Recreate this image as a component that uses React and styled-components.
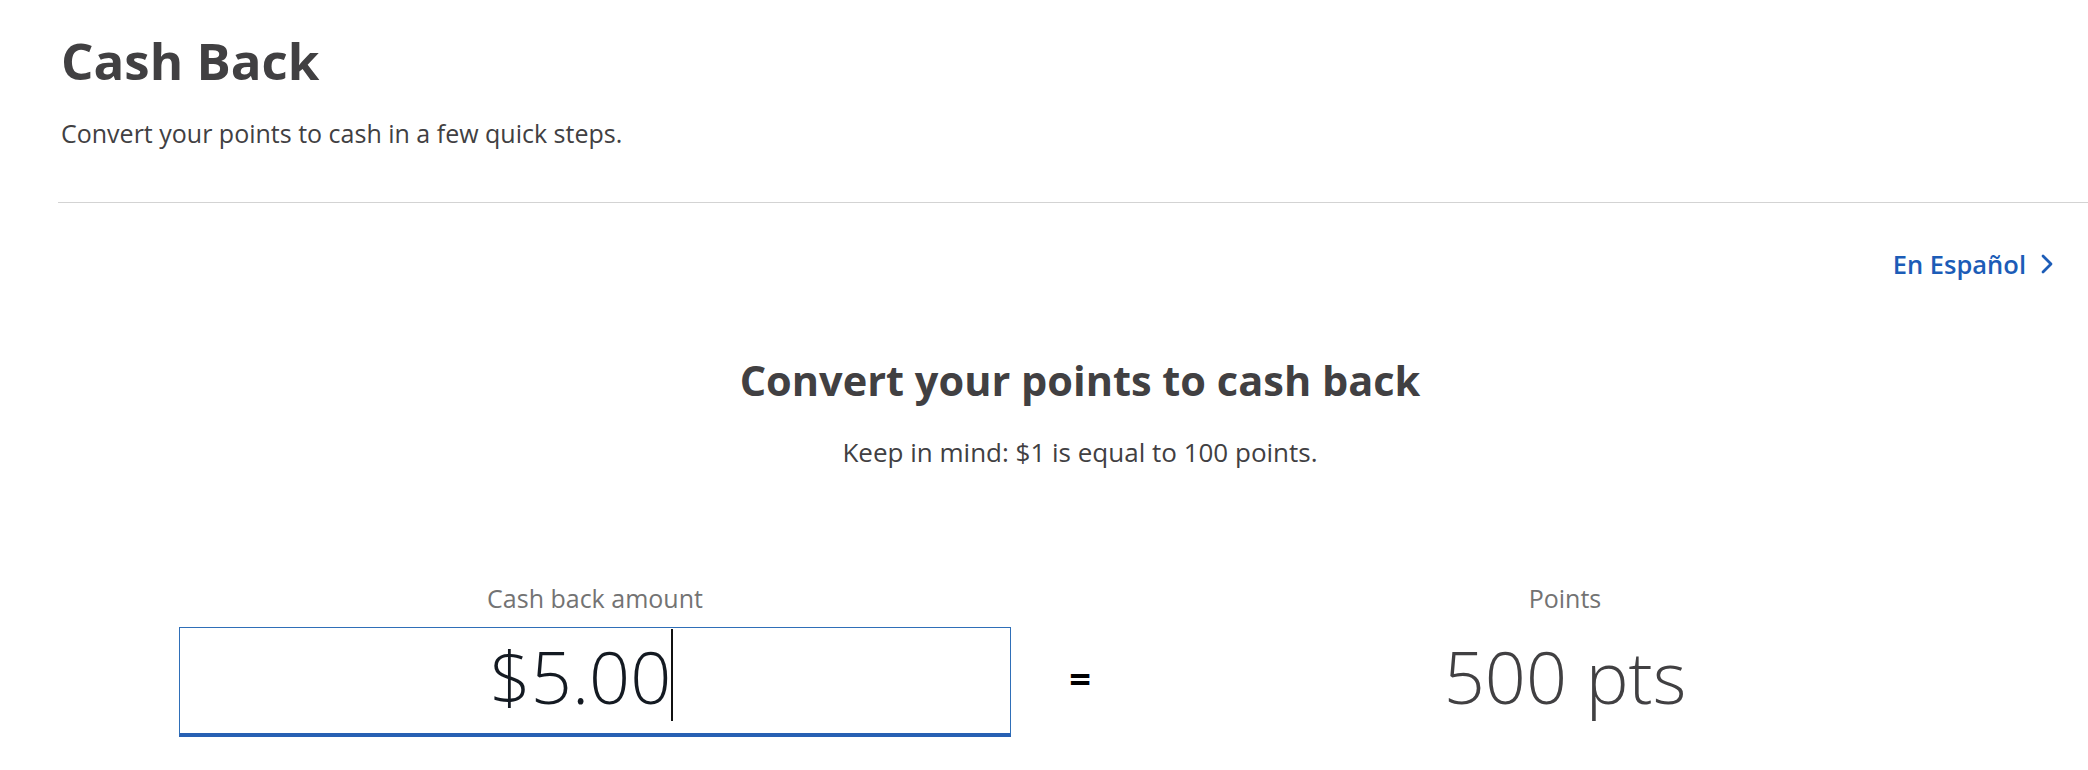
import React from 'react'
import styled, { createGlobalStyle } from 'styled-components'

const GlobalStyle = createGlobalStyle`
  html, body {
    margin: 0;
    padding: 0;
    overflow: hidden;
    background: #fff;
  }
  body {
    font-family: "Open Sans", "Liberation Sans", sans-serif;
    color: #414042;
  }
`

const Main = styled.main`
  width: 2044px;
  margin-left: 58px;
  padding-top: 30px;
`

const Header = styled.header`
  border-bottom: 1px solid #d3d3d3;
  padding: 0 3px 49px;
`

const Title = styled.h1`
  margin: 0;
  font-size: 51px;
  line-height: 1.2;
  font-weight: 700;
  color: #414042;
`

const Intro = styled.p`
  margin: 24px 0 0;
  font-size: 25px;
  line-height: 1.5;
`

const LangRow = styled.div`
  display: flex;
  justify-content: flex-end;
  padding: 42px 49px 0 0;
`

const LangLink = styled.a`
  display: flex;
  align-items: center;
  gap: 15px;
  font-size: 25.5px;
  line-height: 1.5;
  font-weight: 600;
  color: #1c5cb7;
  text-decoration: none;
  cursor: pointer;
`

const Section = styled.section`
  text-align: center;
`

const Heading = styled.h2`
  margin: 71px 0 0;
  font-size: 41.5px;
  line-height: 1.3;
  font-weight: 700;
  color: #414042;
`

const Note = styled.p`
  margin: 25px 0 0;
  font-size: 26px;
  line-height: 1.5;
`

const Converter = styled.div`
  display: grid;
  grid-template-columns: 832px 138px 832px;
  justify-content: center;
  margin-top: 108px;
  row-gap: 10px;
`

const Label = styled.div`
  grid-column: ${(p) => p.col};
  font-size: 25px;
  line-height: 1.5;
  color: #737373;
`

const Field = styled.div`
  display: flex;
  justify-content: center;
  align-items: flex-start;
  height: 105px;
  padding-right: 27px;
  border: 1px solid #2f6fb8;
  border-bottom: 4px solid #2760b3;
`

const Amount = styled.span`
  font-size: 72px;
  line-height: 97px;
  font-weight: 300;
  color: #141a22;
`

const Caret = styled.span`
  width: 2px;
  height: 92px;
  margin-top: 1px;
  background: #111;
`

const Equals = styled.div`
  align-self: center;
  margin-bottom: 8px;
  font-size: 38px;
  font-weight: 700;
  line-height: 1;
  color: #000;
`

const Result = styled.div`
  font-size: 72px;
  line-height: 98px;
  font-weight: 300;
  color: #414042;
`

const Chevron = () => (
  <svg width="12" height="20" viewBox="0 0 12 20" fill="none">
    <path d="M2 2 L10 10 L2 18" stroke="#1c5cb7" strokeWidth="2.8" strokeLinecap="round" strokeLinejoin="round" />
  </svg>
)

export default function App() {
  return (
    <>
      <GlobalStyle />
      <Main>
        <Header>
          <Title>Cash Back</Title>
          <Intro>Convert your points to cash in a few quick steps.</Intro>
        </Header>
        <LangRow>
          <LangLink>
            En Español
            <Chevron />
          </LangLink>
        </LangRow>
        <Section>
          <Heading>Convert your points to cash back</Heading>
          <Note>Keep in mind: $1 is equal to 100 points.</Note>
          <Converter>
            <Label col={1}>Cash back amount</Label>
            <Label col={3}>Points</Label>
            <Field>
              <Amount>$5.00</Amount>
              <Caret />
            </Field>
            <Equals>=</Equals>
            <Result>500 pts</Result>
          </Converter>
        </Section>
      </Main>
    </>
  )
}
